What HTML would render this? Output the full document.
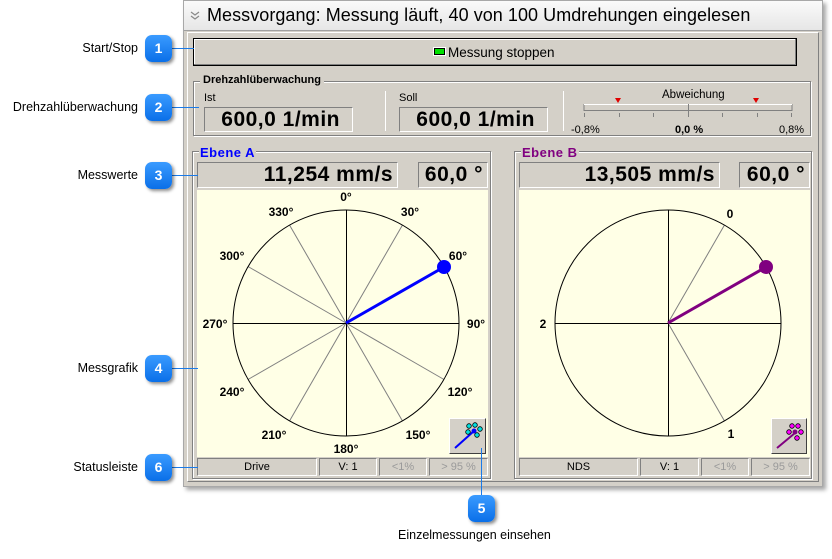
<!DOCTYPE html>
<html><head><meta charset="utf-8"><style>
*{box-sizing:border-box;margin:0;padding:0}
body{width:832px;height:559px;background:#fff;position:relative;overflow:hidden;font-family:"Liberation Sans",sans-serif;font-size:12px;color:#000}
.a{position:absolute}
.lbl{position:absolute;right:694px;font-size:12.5px;white-space:nowrap}
.badge{position:absolute;width:27px;height:27px;border-radius:7px;background:linear-gradient(#3a9bff,#0a6fe8);color:#fff;font-weight:bold;font-size:14px;text-align:center;line-height:27px;box-shadow:2px 2px 3px rgba(0,0,0,.45)}
.ln{position:absolute;background:#1a7ae8}
.sunk{position:absolute;border:1px solid;border-color:#808080 #fff #fff #808080}
.grp{position:absolute;border:1px solid #808080;box-shadow:1px 1px 0 #fff inset,1px 1px 0 #fff}
.big{font-weight:bold;font-size:21px;text-align:right;line-height:23px;padding-right:4px;letter-spacing:.5px;white-space:nowrap;overflow:hidden}
.st{position:absolute;top:458px;height:18px;border:1px solid;border-color:#808080 #fff #fff #808080;text-align:center;line-height:16px;font-size:11px}
.dis{color:#9a9a9a}
.btn{position:absolute;border:1px solid;border-color:#fff #404040 #404040 #fff;background:#d4d0c8}
</style></head><body>
<div class="a" style="left:183px;top:0;width:640px;height:487px;background:#d4d0c8;border:1px solid #a8a8a8;box-shadow:3px 3px 4px rgba(0,0,0,.35)"></div>
<div class="a" style="left:184px;top:1px;width:638px;height:30px;background:linear-gradient(#fafafa,#e6e6e6);border-bottom:1px solid #a0a0a0"></div>
<svg class="a" style="left:190px;top:11px" width="10" height="10"><path d="M1,1 L5,4 L9,1 M1,5 L5,8 L9,5" fill="none" stroke="#888" stroke-width="1.2"/></svg>
<div class="a" style="left:207px;top:5px;font-size:18px;letter-spacing:.05px;white-space:nowrap">Messvorgang: Messung läuft, 40 von 100 Umdrehungen eingelesen</div>
<div class="a" style="left:187px;top:32px;width:632px;height:450px;border:1px solid #fff;border-right-color:#808080;border-bottom-color:#808080"></div>
<div class="a" style="left:193px;top:38px;width:604px;height:28px;border:1px solid #000;background:#d4d0c8;box-shadow:inset -1px -1px 0 #808080,inset 1px 1px 0 #fff"></div>
<div class="a" style="left:434px;top:48px;width:11px;height:7px;background:#00e000;border:1px solid #000;outline:1px solid #fff"></div>
<div class="a" style="left:448px;top:45px;font-size:13.5px">Messung stoppen</div>
<div class="grp" style="left:193px;top:81px;width:618px;height:55px"></div>
<div class="a" style="left:200px;top:74px;background:#d4d0c8;padding:0 3px;font-weight:bold;font-size:11px">Drehzahlüberwachung</div>
<div class="a" style="left:204px;top:92px;font-size:11px">Ist</div>
<div class="sunk big" style="left:204px;top:107px;width:149px;height:25px;padding-right:12px">600,0 1/min</div>
<div class="a" style="left:385px;top:91px;width:1px;height:40px;background:#808080;border-right:1px solid #fff"></div>
<div class="a" style="left:399px;top:92px;font-size:11px">Soll</div>
<div class="sunk big" style="left:399px;top:107px;width:149px;height:25px;padding-right:12px">600,0 1/min</div>
<div class="a" style="left:563px;top:91px;width:1px;height:40px;background:#808080;border-right:1px solid #fff"></div>
<div class="a" style="left:662px;top:89px;font-size:11.5px">Abweichung</div>
<svg class="a" style="left:570px;top:96px" width="240" height="40">
<polygon points="45,2 51,2 48,7" fill="#e00000"/><polygon points="183,2 189,2 186,7" fill="#e00000"/>
<rect x="14" y="8.5" width="208" height="6" fill="none" stroke="#808080"/><line x1="14" y1="8.5" x2="222" y2="8.5" stroke="#fff"/>
<g stroke="#808080"><line x1="14.5" y1="17" x2="14.5" y2="21"/><line x1="49.5" y1="17" x2="49.5" y2="21"/><line x1="83.5" y1="17" x2="83.5" y2="21"/><line x1="118.5" y1="8" x2="118.5" y2="21"/><line x1="152.5" y1="17" x2="152.5" y2="21"/><line x1="187.5" y1="17" x2="187.5" y2="21"/><line x1="221.5" y1="17" x2="221.5" y2="21"/></g>
<text x="1" y="37" font-size="11" font-family="Liberation Sans">-0,8%</text>
<text x="105" y="37" font-size="11" font-weight="bold" font-family="Liberation Sans">0,0 %</text>
<text x="209" y="37" font-size="11" font-family="Liberation Sans">0,8%</text>
</svg>
<div class="grp" style="left:192px;top:151px;width:299px;height:328px"></div>
<div class="a" style="left:199px;top:145px;background:#d4d0c8;padding:0 1px;font-weight:bold;font-size:13px;color:#0000ff;letter-spacing:.5px">Ebene A</div>
<div class="sunk big" style="left:197px;top:162px;width:201px;height:26px;line-height:24px">11,254 mm/s</div>
<div class="sunk big" style="left:418px;top:162px;width:70px;height:26px;line-height:24px">60,0 °</div>
<svg class="a" style="left:197px;top:190px" width="291" height="267">
<rect width="291" height="267" fill="#ffffe6"/>
<g stroke="#808080" stroke-width="1">
<line x1="149" y1="133" x2="205.5" y2="35"/><line x1="149" y1="133" x2="92.5" y2="35"/>
<line x1="149" y1="133" x2="51" y2="76.5"/><line x1="149" y1="133" x2="51" y2="189.5"/>
<line x1="149" y1="133" x2="92.5" y2="231"/><line x1="149" y1="133" x2="205.5" y2="231"/>
<line x1="149" y1="133" x2="247" y2="189.5"/></g>
<g stroke="#000"><line x1="149.5" y1="20" x2="149.5" y2="246"/><line x1="36" y1="133.5" x2="262" y2="133.5"/></g>
<circle cx="149" cy="133" r="113" fill="none" stroke="#000"/>
<line x1="149" y1="133" x2="247" y2="77" stroke="#0000ff" stroke-width="3"/>
<circle cx="247" cy="77" r="7" fill="#0000ff"/>
<g font-family="Liberation Sans" font-size="12" font-weight="bold" text-anchor="middle">
<text x="149" y="11">0°</text><text x="213" y="26">30°</text><text x="261" y="70">60°</text>
<text x="279" y="138">90°</text><text x="263" y="206">120°</text><text x="221" y="249">150°</text>
<text x="149" y="263">180°</text><text x="77" y="249">210°</text><text x="35" y="206">240°</text>
<text x="18" y="138">270°</text><text x="35" y="70">300°</text><text x="84" y="26">330°</text></g>
</svg>
<div class="btn" style="left:449px;top:418px;width:37px;height:36px"></div>
<svg class="a" style="left:452px;top:421px" width="32" height="30">
<line x1="3" y1="27" x2="22" y2="10" stroke="#0000ff" stroke-width="2"/>
<g fill="#00e0e0" stroke="#000" stroke-width=".8"><circle cx="17" cy="5" r="2.3"/><circle cx="23" cy="4" r="2.3"/><circle cx="28" cy="8" r="2.3"/><circle cx="16" cy="11" r="2.3"/><circle cx="25" cy="14" r="2.3"/></g>
<circle cx="22" cy="10" r="2.5" fill="#0000ff"/></svg>
<div class="st" style="left:197px;width:120px">Drive</div>
<div class="st" style="left:319px;width:58px">V: 1</div>
<div class="st dis" style="left:379px;width:48px">&lt;1%</div>
<div class="st dis" style="left:429px;width:59px">&gt; 95 %</div>
<div class="grp" style="left:514px;top:151px;width:298px;height:328px"></div>
<div class="a" style="left:521px;top:145px;background:#d4d0c8;padding:0 1px;font-weight:bold;font-size:13px;color:#800080;letter-spacing:.5px">Ebene B</div>
<div class="sunk big" style="left:519px;top:162px;width:201px;height:26px;line-height:24px">13,505 mm/s</div>
<div class="sunk big" style="left:739px;top:162px;width:71px;height:26px;line-height:24px">60,0 °</div>
<svg class="a" style="left:519px;top:190px" width="291" height="267">
<rect width="291" height="267" fill="#ffffe6"/>
<g stroke="#808080"><line x1="149" y1="133" x2="205.5" y2="35"/><line x1="149" y1="133" x2="205.5" y2="231"/></g>
<g stroke="#000"><line x1="149.5" y1="20" x2="149.5" y2="246"/><line x1="36" y1="133.5" x2="262" y2="133.5"/></g>
<circle cx="149" cy="133" r="113" fill="none" stroke="#000"/>
<line x1="149" y1="133" x2="247" y2="77" stroke="#800080" stroke-width="3"/>
<circle cx="247" cy="77" r="7" fill="#800080"/>
<g font-family="Liberation Sans" font-size="12" font-weight="bold" text-anchor="middle">
<text x="211" y="28">0</text><text x="24" y="138">2</text><text x="212" y="248">1</text></g>
</svg>
<div class="btn" style="left:771px;top:418px;width:36px;height:36px"></div>
<svg class="a" style="left:774px;top:421px" width="32" height="30">
<line x1="3" y1="27" x2="21" y2="12" stroke="#800080" stroke-width="2"/>
<g fill="#ff00ff" stroke="#000" stroke-width=".8"><circle cx="18" cy="5" r="2.3"/><circle cx="24" cy="5" r="2.3"/><circle cx="27" cy="11" r="2.3"/><circle cx="15" cy="11" r="2.3"/><circle cx="23" cy="17" r="2.3"/></g>
<circle cx="21" cy="11" r="2.5" fill="#800080"/></svg>
<div class="st" style="left:519px;width:119px">NDS</div>
<div class="st" style="left:640px;width:59px">V: 1</div>
<div class="st dis" style="left:701px;width:48px">&lt;1%</div>
<div class="st dis" style="left:751px;width:59px">&gt; 95 %</div>
<div class="lbl" style="top:41px">Start/Stop</div>
<div class="lbl" style="top:100px">Drehzahlüberwachung</div>
<div class="lbl" style="top:168px">Messwerte</div>
<div class="lbl" style="top:361px">Messgrafik</div>
<div class="lbl" style="top:460px">Statusleiste</div>
<div class="ln" style="left:172px;top:48px;width:22px;height:1px"></div>
<div class="ln" style="left:172px;top:107px;width:27px;height:1px"></div>
<div class="ln" style="left:172px;top:175px;width:26px;height:1px"></div>
<div class="ln" style="left:172px;top:368px;width:26px;height:1px"></div>
<div class="ln" style="left:172px;top:467px;width:26px;height:1px"></div>
<div class="ln" style="left:481px;top:448px;width:1px;height:48px"></div>
<div class="badge" style="left:145px;top:35px">1</div>
<div class="badge" style="left:145px;top:94px">2</div>
<div class="badge" style="left:145px;top:162px">3</div>
<div class="badge" style="left:145px;top:355px">4</div>
<div class="badge" style="left:468px;top:495px">5</div>
<div class="badge" style="left:145px;top:454px">6</div>
<div class="a" style="left:398px;top:528px;font-size:12.5px">Einzelmessungen einsehen</div>
</body></html>
